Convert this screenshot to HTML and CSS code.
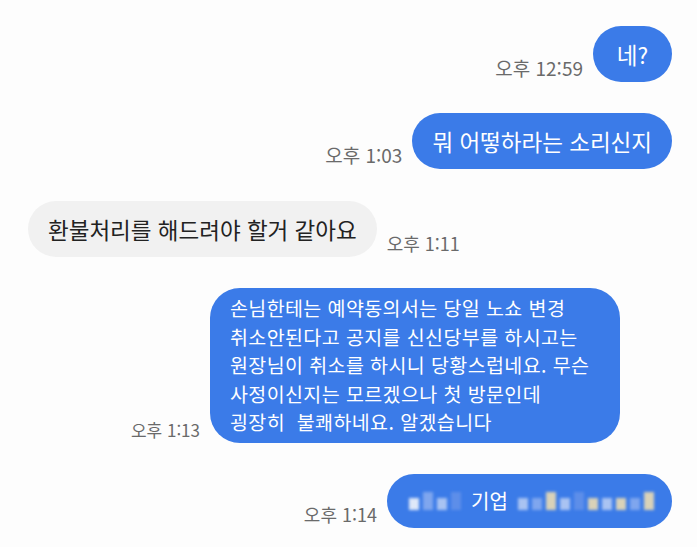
FILE: index.html
```html
<!DOCTYPE html>
<html lang="ko">
<head>
    <meta charset="UTF-8">
    <meta name="viewport" content="width=device-width, initial-scale=1.0">
    <title>대화</title>
    <link rel="stylesheet" href="styles.css">
</head>
<body>
    <div class="chat">
        <div class="row out big">
            <span class="time">오후 12:59</span>
            <div class="bubble mine short">네?</div>
        </div>

        <div class="row out big">
            <span class="time">오후 1:03</span>
            <div class="bubble mine">뭐 어떻하라는 소리신지</div>
        </div>

        <div class="row in big">
            <div class="bubble theirs">환불처리를 해드려야 할거 같아요</div>
            <span class="time small">오후 1:11</span>
        </div>

        <div class="row out narrow">
            <span class="time">오후 1:13</span>
            <div class="bubble mine long">손님한테는 예약동의서는 당일 노쇼 변경<br>취소안된다고 공지를 신신당부를 하시고는<br>원장님이 취소를 하시니 당황스럽네요. 무슨<br>사정이신지는 모르겠으나 첫 방문인데<br>굉장히&nbsp; 불쾌하네요. 알겠습니다</div>
        </div>

        <div class="row out last">
            <span class="time">오후 1:14</span>
            <div class="bubble mine hidden">
                <span class="blur">
                    <i class="px a"></i><i class="px b tall"></i><i class="px c"></i><i class="px d tall"></i>
                </span>
                기업
                <span class="blur">
                    <i class="px c"></i><i class="px b"></i><i class="px e tall"></i><i class="px c"></i><i class="px d tall"></i><i class="px e"></i><i class="px c"></i><i class="px e"></i><i class="px b"></i><i class="px e tall"></i>
                </span>
            </div>
        </div>
    </div>
</body>
</html>
```

FILE: styles.css
```css
body {
    margin: 0;
    background: #fdfdfd;
    font-family: "Noto Sans CJK KR", "Noto Sans", sans-serif;
    color: #222;
}
.chat {
    display: flex;
    flex-direction: column;
    gap: 31px;
    padding: 26px 25px 0 28px;
}
.row {
    display: flex;
    align-items: flex-end;
    gap: 10px;
}
.row.out {
    justify-content: flex-end;
}
.row.in {
    margin-top: 1px;
}
.row.narrow {
    padding-right: 52px;
}
.time {
    font-size: 17px;
    line-height: 25px;
    color: #6a6a6a;
    margin-bottom: 1px;
    white-space: nowrap;
}
.bubble {
    font-size: 20px;
    line-height: 26px;
    padding: 15px 20px;
    border-radius: 28px;
    white-space: nowrap;
}
.big .bubble {
    font-size: 22.5px;
    line-height: 33px;
    padding-top: 12px;
    padding-bottom: 11px;
}
.big .time {
    font-size: 19px;
    line-height: 28px;
    margin-bottom: 0;
}
.big .time.small {
    font-size: 18px;
    line-height: 27px;
}
.last .time {
    font-size: 18px;
    line-height: 27px;
    margin-bottom: 0;
}
.bubble.mine {
    background: #3b7be8;
    color: #fff;
}
.bubble.theirs {
    background: #f1f1f1;
    color: #222;
}
.bubble.short {
    min-width: 79px;
    box-sizing: border-box;
    text-align: center;
    padding: 12px 18px 11px;
}
.bubble.long {
    width: 410px;
    box-sizing: border-box;
    font-size: 19.5px;
    letter-spacing: 0.4px;
    line-height: 28.5px;
    padding: 6px 20px;
    border-radius: 30px;
}
.bubble.hidden {
    width: 285px;
    box-sizing: border-box;
    display: flex;
    align-items: center;
    gap: 10px;
    padding: 12px 20px 12px 22px;
    line-height: 30px;
}
.blur {
    display: inline-flex;
    gap: 4px;
    align-items: flex-end;
    filter: blur(1.5px);
}
.px {
    display: inline-block;
    width: 10px;
    height: 12px;
}
.px.tall {
    height: 18px;
}
.px.a { background: #dfe8f8; }
.px.b { background: #7fa6ee; }
.px.c { background: #a9c3f2; }
.px.d { background: #5d8ee9; }
.px.e { background: #d9d2b8; }
```
